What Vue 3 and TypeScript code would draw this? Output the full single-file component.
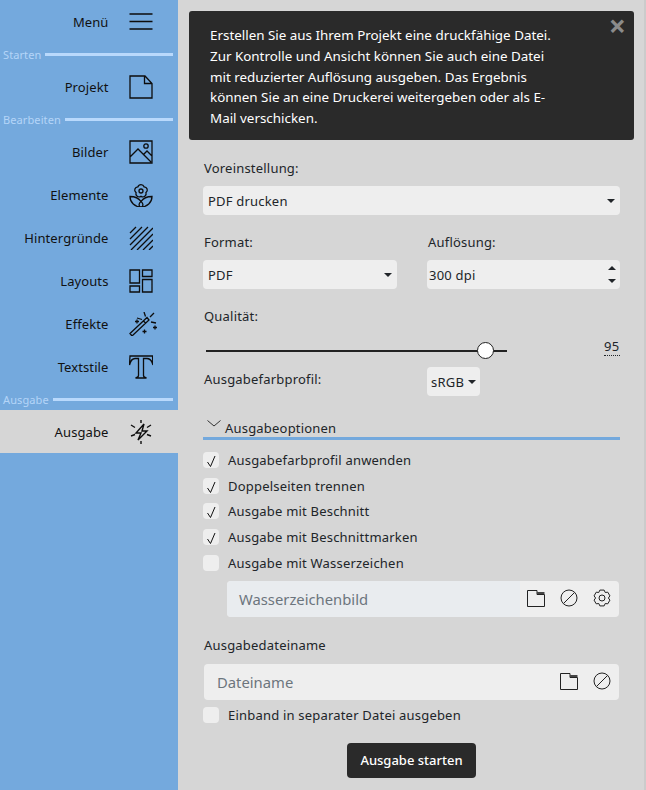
<script setup lang="ts">
const gearPath = (() => {
  const pts: string[] = []
  for (let i = 0; i < 6; i++) {
    const a = (i * 60 - 90) * Math.PI / 180
    const steps: [number, number][] = [[-30, 6.4], [-15, 8.2], [15, 8.2], [30, 6.4]]
    for (const [d, r] of steps) {
      const t = a + d * Math.PI / 180
      pts.push(`${(9 + r * Math.cos(t)).toFixed(2)} ${(9 + r * Math.sin(t)).toFixed(2)}`)
    }
  }
  return 'M' + pts.join('L') + 'Z'
})()

const options = [
  { label: 'Ausgabefarbprofil anwenden', checked: true },
  { label: 'Doppelseiten trennen', checked: true },
  { label: 'Ausgabe mit Beschnitt', checked: true },
  { label: 'Ausgabe mit Beschnittmarken', checked: true },
  { label: 'Ausgabe mit Wasserzeichen', checked: false },
]
</script>

<template>
  <div class="app">
    <nav class="side">
      <div class="row">
        <span>Menü</span>
        <svg class="ico" viewBox="0 0 24 24"><path d="M0.500 4h23M0.500 11.500h23M0.500 19h23" /></svg>
      </div>
      <div class="sec"><span>Starten</span><i></i></div>
      <div class="row">
        <span>Projekt</span>
        <svg class="ico" viewBox="0 0 24 24"><path d="M1 1h15l7 7.500V23H1zM15.500 1v7.500H23" /></svg>
      </div>
      <div class="sec"><span>Bearbeiten</span><i></i></div>
      <div class="row">
        <span>Bilder</span>
        <svg class="ico" viewBox="0 0 24 24"><path d="M1 1h22v22H1zM1 17l8-8 13 13M14 15l4-4 5 5" /><circle cx="17" cy="6" r="2.200" /></svg>
      </div>
      <div class="row">
        <span>Elemente</span>
        <svg class="ico" viewBox="0 0 24 24"><path d="M8.940 3.800A3.200 3.200 0 0 1 15.060 3.800A3.200 3.200 0 0 1 16.950 9.600A3.200 3.200 0 0 1 12 13.200A3.200 3.200 0 0 1 7.050 9.600A3.200 3.200 0 0 1 8.940 3.800Z" /><circle cx="12" cy="8" r="2" /><path d="M1 13.500c0 6 5 10.500 11 10.500s11-4.500 11-10.500c-5 0-9 2-11 5-2-3-6-5-11-5z" /><path d="M12 18.500c-2 1.500-2.500 3.500-1 5.500M12 18.500c2 1.500 2.500 3.500 1 5.500" /></svg>
      </div>
      <div class="row">
        <span>Hintergründe</span>
        <svg class="ico" viewBox="0 0 24 24"><path d="M1 7l6-6M1 13L13 1M1 19L19 1M2 24L24 2M8 24L24 8M14 24l10-10M20 24l4-4" /></svg>
      </div>
      <div class="row">
        <span>Layouts</span>
        <svg class="ico" viewBox="0 0 24 24"><path d="M1 1h9.500v13H1zM13.500 1H23v6.500h-9.500zM1 17h9.500v6H1zM13.500 10.500H23V23h-9.500z" /></svg>
      </div>
      <div class="row">
        <span>Effekte</span>
        <svg class="ico wand" viewBox="0 0 28 24"><path d="M1 21.500l17-16 2 2.500-17 16zM14.500 9l2.500 2.500M15 0l1.500 4.500M25 1l-4 4M8 6l5 1.500M22 10l5 1M6 9.500h4M8 7.500v4M13.500 19.500h4M15.500 17.500v4M24 15.500h4M26 13.500v4" /></svg>
      </div>
      <div class="row">
        <span>Textstile</span>
        <svg class="ico" viewBox="0 0 24 24"><path d="M1 1h22.500l.5 9c-1-4-3-6.500-6-6.500h-3.500v17c0 1.500 1 2 3 2.500H6.500c2-.5 3-1 3-2.500v-17H6c-3 0-4.500 2.500-5.500 6.500z" /></svg>
      </div>
      <div class="sec"><span>Ausgabe</span><i></i></div>
      <div class="row active">
        <span>Ausgabe</span>
        <svg class="ico bolt" viewBox="0 0 24 24"><path d="M15 4L7 13h5l-3 7 9-9h-5zM12 0v3M12 21v3M2 5l4 2.500M22 5l-4 2.500M2 16l4-1.500M22 16l-4-1.500" /></svg>
      </div>
    </nav>

    <main class="main">
      <section class="alert">
        <p>Erstellen Sie aus Ihrem Projekt eine druckfähige Datei. Zur Kontrolle und Ansicht können Sie auch eine Datei mit reduzierter Auflösung ausgeben. Das Ergebnis können Sie an eine Druckerei weitergeben oder als E-Mail verschicken.</p>
        <span class="close">×</span>
      </section>

      <form class="form" @submit.prevent>
        <div class="lbl preset-lbl">Voreinstellung:</div>
        <div class="field"><span>PDF drucken</span><b class="caret"></b></div>

        <div class="two">
          <div>
            <div class="lbl">Format:</div>
            <div class="field"><span>PDF</span><b class="caret"></b></div>
          </div>
          <div>
            <div class="lbl">Auflösung:</div>
            <div class="field spin">
              <span>300 dpi</span>
              <em><b class="caret up"></b><b class="caret"></b></em>
            </div>
          </div>
        </div>

        <div class="lbl q-lbl">Qualität:</div>
        <div class="slider-row">
          <div class="track"><i class="thumb"></i></div>
          <span class="val">95</span>
        </div>

        <div class="two profile">
          <div class="lbl">Ausgabefarbprofil:</div>
          <div class="field small"><span>sRGB</span><b class="caret"></b></div>
        </div>

        <div class="opt-head">
          <svg class="chev" viewBox="0 0 14 7"><path d="M.5.500 7 6l6.500-5.500" /></svg>
          <span>Ausgabeoptionen</span>
        </div>

        <div class="checks">
          <label v-for="o in options" :key="o.label" class="chk">
            <span class="box"><svg v-if="o.checked" viewBox="0 0 16 16"><path d="M4.500 10l3 4.500L12 4" /></svg></span>
            <span>{{ o.label }}</span>
          </label>
        </div>

        <div class="group water">
          <div class="ph shaded">Wasserzeichenbild</div>
          <div class="tools">
            <svg class="tool" viewBox="0 0 18 18"><path d="M.5 17.500V1.500H10v4h7.500v12z" /><path class="thick" d="M10 4h7.500" /></svg>
            <svg class="tool" viewBox="0 0 18 18"><circle cx="9" cy="9" r="8" /><path d="M3.500 14.500l11-11" /></svg>
            <svg class="tool" viewBox="0 0 18 18"><path :d="gearPath" /><circle cx="9" cy="9" r="3" /></svg>
          </div>
        </div>

        <div class="lbl file-lbl">Ausgabedateiname</div>
        <div class="group file">
          <div class="ph">Dateiname</div>
          <div class="tools">
            <svg class="tool" viewBox="0 0 18 18"><path d="M.5 17.500V1.500H10v4h7.500v12z" /><path class="thick" d="M10 4h7.500" /></svg>
            <svg class="tool" viewBox="0 0 18 18"><circle cx="9" cy="9" r="8" /><path d="M3.500 14.500l11-11" /></svg>
          </div>
        </div>

        <label class="chk cover">
          <span class="box"></span>
          <span>Einband in separater Datei ausgeben</span>
        </label>

        <div class="actions"><button type="button" class="start">Ausgabe starten</button></div>
      </form>
    </main>
  </div>
</template>

<style>
html, body { margin: 0; background: #d6d6d6; }
</style>

<style scoped>
* { box-sizing: border-box; }
.app {
  display: flex;
  width: 646px;
  height: 790px;
  overflow: hidden;
  font-family: "Noto Sans", "Open Sans", sans-serif;
  font-size: 13px;
  letter-spacing: .2px;
  color: #212529;
  background: #d6d6d6;
  border-right: 2px solid #cbcbcb;
}
.side {
  width: 178px;
  flex: none;
  background: #74a9dd;
  color: #111;
  letter-spacing: .1px;
}
.row {
  height: 43px;
  display: flex;
  align-items: center;
  justify-content: flex-end;
  gap: 20px;
  padding-right: 25.500px;
}
.row.active { background: #d6d6d6; }
.ico {
  width: 24px;
  height: 24px;
  flex: none;
  fill: none;
  stroke: #0d0d0d;
  stroke-width: 1.300;
}
.wand { width: 28px; margin-right: -4px; }
.bolt { stroke-width: 1.400; }
.sec {
  height: 22px;
  display: flex;
  align-items: center;
  gap: 4px;
  padding: 1px 5px 0 3px;
  font-size: 11px;
  letter-spacing: .1px;
  color: #b5d5f8;
}
.sec i {
  flex: 1;
  height: 3px;
  background: #b9d9fc;
}
.main {
  flex: 1;
  padding: 11px 10px 0 11px;
  min-width: 0;
}
.alert {
  position: relative;
  height: 129px;
  background: #2a2a2a;
  border-radius: 3px;
  color: #fff;
  padding: 14px 79px 0 21px;
  font-size: 13.400px;
  letter-spacing: 0;
  line-height: 20.800px;
}
.alert p { margin: 0; }
.close {
  position: absolute;
  right: 8px;
  top: 2px;
  font-size: 30px;
  line-height: 26px;
  font-weight: 700;
  color: #8b8b8b;
}
.form { padding: 0 14px 0 14px; }
.lbl { line-height: 18px; }
.preset-lbl { margin: 19px 0 9px; padding-left: 1px; }
.field {
  height: 29px;
  border-radius: 4px;
  background: #eee;
  display: flex;
  align-items: center;
  justify-content: space-between;
  padding: 0 5px 0 5px;
}
.caret {
  width: 0;
  height: 0;
  border-left: 4.500px solid transparent;
  border-right: 4.500px solid transparent;
  border-top: 4.500px solid #212529;
  display: block;
}
.caret.up {
  border-top: 0;
  border-bottom: 4.500px solid #212529;
}
.spin { padding: 0 4px 0 2px; }
.spin em { display: flex; flex-direction: column; gap: 9px; }
.two {
  display: grid;
  grid-template-columns: 194px 193px;
  column-gap: 30px;
  margin-top: 18px;
}
.two .lbl { margin-bottom: 9px; padding-left: 1px; }
.q-lbl { margin-top: 18px; padding-left: 1px; }
.slider-row {
  height: 32px;
  display: flex;
  align-items: center;
  justify-content: space-between;
  margin-top: 9px;
}
.track {
  position: relative;
  width: 301px;
  height: 2px;
  margin: 2px 0 0 3px;
  background: #222;
}
.thumb {
  position: absolute;
  left: 271px;
  top: -8px;
  width: 17px;
  height: 17px;
  border-radius: 50%;
  background: #fff;
  border: 1px solid #222;
}
.val {
  border-bottom: 1px dotted #212529;
  line-height: 18px;
  width: 16px;
  margin-top: -7px;
}
.two.profile { margin-top: 1px; align-items: start; }
.profile .lbl { margin: 3px 0 0; }
.field.small {
  width: 53px;
  padding: 0 4px;
}
.opt-head {
  position: relative;
  height: 27px;
  margin-top: 17px;
  border-bottom: 3px solid #74a9dd;
  padding: 5px 0 0 22px;
  line-height: 20px;
}
.chev {
  position: absolute;
  left: 4px;
  top: 7px;
  width: 14px;
  height: 7px;
  fill: none;
  stroke: #333;
}
.checks {
  display: flex;
  flex-direction: column;
  gap: 7.700px;
  margin-top: 11px;
}
.chk {
  display: flex;
  align-items: center;
  gap: 9px;
  height: 18px;
  line-height: 18px;
}
.box {
  width: 16px;
  height: 16px;
  flex: none;
  border-radius: 4px;
  background: #eee;
}
.box svg {
  display: block;
  width: 16px;
  height: 16px;
  fill: none;
  stroke: #111;
  stroke-width: 1;
}
.group {
  display: flex;
  height: 36px;
  border-radius: 4px;
  overflow: hidden;
  background: #eee;
}
.water { margin: 9px 1px 0 24px; }
.file { margin: 9px 1px 0 1px; }
.ph {
  flex: 1;
  display: flex;
  align-items: center;
  padding-left: 12px;
  font-size: 14.800px;
  letter-spacing: 0;
  color: #6c757d;
}
.file .ph { padding-left: 13px; }
.shaded { background: #e9ecef; }
.tools {
  display: flex;
  align-items: center;
  gap: 15px;
  padding: 0 8px 2px 7px;
}
.tool {
  width: 18px;
  height: 18px;
  fill: none;
  stroke: #222;
  stroke-width: 1;
}
.tool .thick { stroke-width: 2.200; stroke: #444; }
.file-lbl { margin-top: 19px; padding-left: 1px; }
.file-lbl + .file { margin-top: 10px; }
.cover { margin-top: 6px; }
.actions {
  display: flex;
  justify-content: center;
  margin-top: 19px;
}
.start {
  width: 129px;
  height: 35px;
  border: 0;
  border-radius: 4px;
  background: #2a2a2a;
  color: #fff;
  font: inherit;
  font-weight: 500;
}
</style>
